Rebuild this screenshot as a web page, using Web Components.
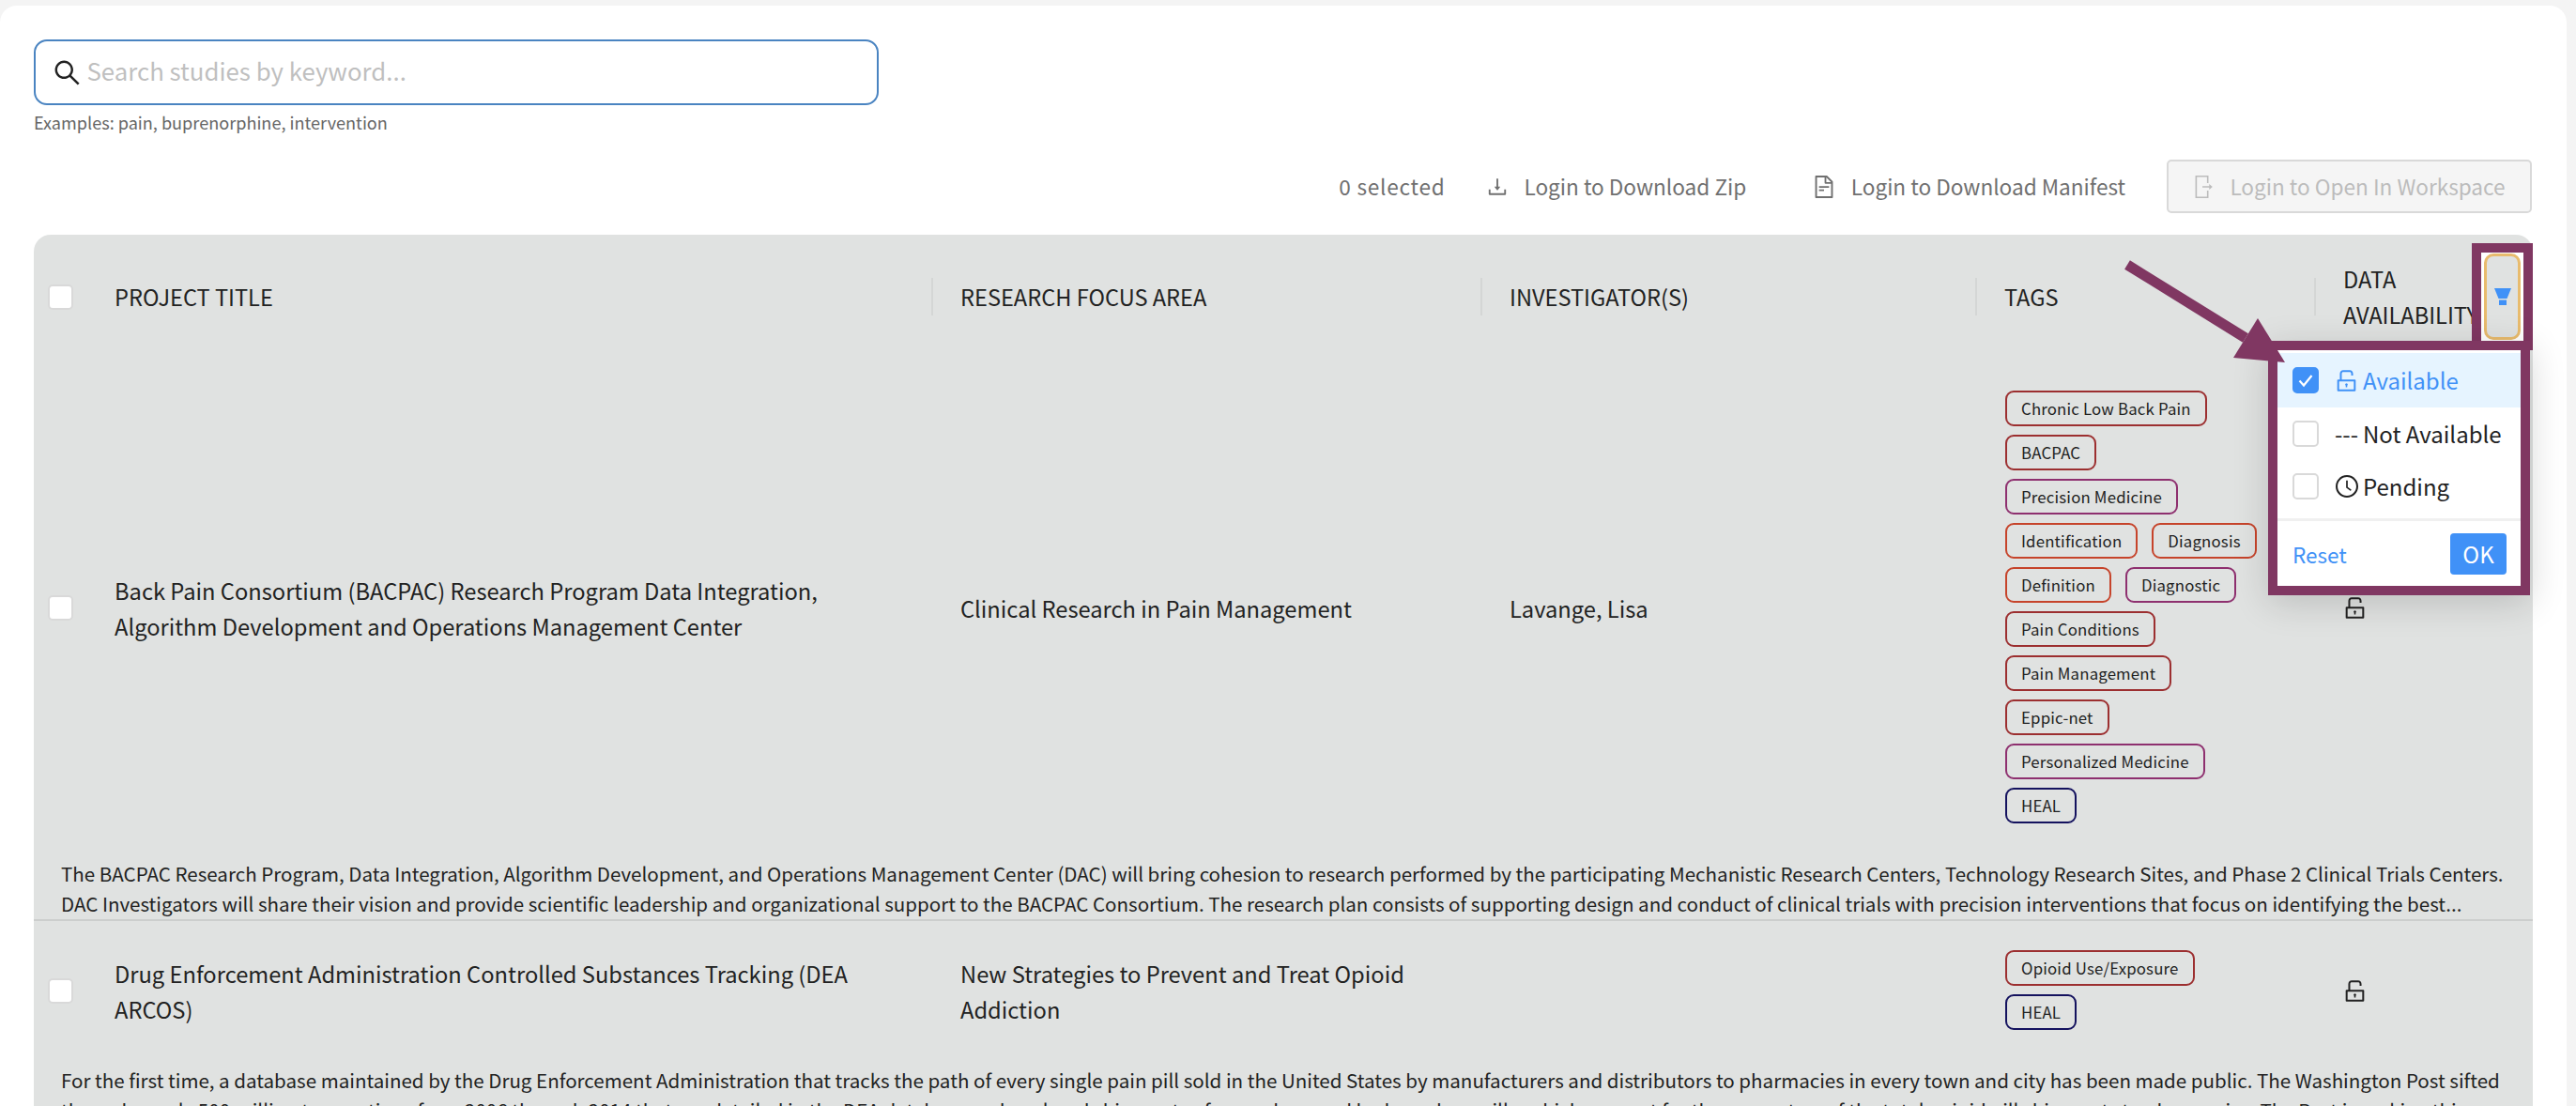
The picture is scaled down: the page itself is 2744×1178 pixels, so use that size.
<!DOCTYPE html>
<html>
<head>
<meta charset="utf-8">
<style>
html,body{margin:0;height:1178px;overflow:hidden;background:#f4f4f4;}
body{font-family:"Noto Sans CJK SC","Source Sans Pro","Noto Sans",sans-serif;color:#222;}
</style>
</head>
<body>
<study-page>
	<search-box placeholder="Search studies by keyword..." hint="Examples: pain, buprenorphine, intervention"></search-box>
	<study-toolbar></study-toolbar>
	<study-table>
		<table-head></table-head>
		<study-row>
			<span slot="title">Back Pain Consortium (BACPAC) Research Program Data Integration, Algorithm Development and Operations Management Center</span>
			<span slot="focus">Clinical Research in Pain Management</span>
			<span slot="people">Lavange, Lisa</span>
			<tag-chip slot="tags" kind="red">Chronic Low Back Pain</tag-chip>
			<tag-chip slot="tags" kind="red">BACPAC</tag-chip>
			<tag-chip slot="tags" kind="purple">Precision Medicine</tag-chip>
			<tag-chip slot="tags" kind="orange">Identification</tag-chip>
			<tag-chip slot="tags" kind="orange">Diagnosis</tag-chip>
			<tag-chip slot="tags" kind="orange">Definition</tag-chip>
			<tag-chip slot="tags" kind="purple">Diagnostic</tag-chip>
			<tag-chip slot="tags" kind="red">Pain Conditions</tag-chip>
			<tag-chip slot="tags" kind="red">Pain Management</tag-chip>
			<tag-chip slot="tags" kind="red">Eppic-net</tag-chip>
			<tag-chip slot="tags" kind="purple">Personalized Medicine</tag-chip>
			<tag-chip slot="tags" kind="navy">HEAL</tag-chip>
			The BACPAC Research Program, Data Integration, Algorithm Development, and Operations Management Center (DAC) will bring cohesion to research performed by the participating Mechanistic Research Centers, Technology Research Sites, and Phase 2 Clinical Trials Centers. DAC Investigators will share their vision and provide scientific leadership and organizational support to the BACPAC Consortium. The research plan consists of supporting design and conduct of clinical trials with precision interventions that focus on identifying the best...
		</study-row>
		<study-row>
			<span slot="title">Drug Enforcement Administration Controlled Substances Tracking (DEA ARCOS)</span>
			<span slot="focus">New Strategies to Prevent and Treat Opioid Addiction</span>
			<tag-chip slot="tags" kind="red">Opioid Use/Exposure</tag-chip>
			<tag-chip slot="tags" kind="navy">HEAL</tag-chip>
			For the first time, a database maintained by the Drug Enforcement Administration that tracks the path of every single pain pill sold in the United States by manufacturers and distributors to pharmacies in every town and city has been made public. The Washington Post sifted through nearly 500 million transactions from 2006 through 2014 that are detailed in the DEA database and analyzed shipments of oxycodone and hydrocodone pills, which account for three-quarters of the total opioid pill shipments to pharmacies. The Post is making this
		</study-row>
		<filter-frame slot="over"></filter-frame>
		<filter-menu slot="over"></filter-menu>
		<callout-arrow slot="over"></callout-arrow>
	</study-table>
</study-page>

<script>
const ICONS = {
	search: 'M909.6 854.5L649.9 594.8C690.2 542.7 712 479 712 412c0-80.2-31.3-155.4-87.9-212.1-56.6-56.7-132-87.9-212.1-87.9s-155.5 31.3-212.1 87.9C143.2 256.5 112 331.8 112 412c0 80.1 31.3 155.5 87.9 212.1C256.5 680.8 331.8 712 412 712c67 0 130.6-21.8 182.7-62l259.7 259.6a8.2 8.2 0 0 0 11.6 0l43.6-43.5a8.2 8.2 0 0 0 0-11.6zM570.4 570.4C528 612.7 471.8 636 412 636s-116-23.3-158.4-65.6C211.3 528 188 471.8 188 412s23.3-116.1 65.6-158.4C296 211.3 352.2 188 412 188s116.1 23.2 158.4 65.6S636 352.2 636 412s-23.3 116.1-65.6 158.4z',
	unlock: 'M832 464H332V240c0-30.9 25.1-56 56-56h248c30.9 0 56 25.1 56 56v68c0 4.4 3.6 8 8 8h56c4.4 0 8-3.6 8-8v-68c0-70.7-57.3-128-128-128H388c-70.7 0-128 57.3-128 128v224h-68c-17.7 0-32 14.3-32 32v384c0 17.7 14.3 32 32 32h640c17.7 0 32-14.3 32-32V496c0-17.7-14.3-32-32-32zm-40 376H232V536h560v304zM484 701v53c0 4.4 3.6 8 8 8h40c4.4 0 8-3.6 8-8v-53a48.01 48.01 0 1 0-56 0z',
	download: 'M505.7 661a8 8 0 0 0 12.6 0l112-141.7c4.1-5.2.4-12.9-6.3-12.9h-74.1V168c0-4.4-3.6-8-8-8h-60c-4.4 0-8 3.6-8 8v338.3H400c-6.7 0-10.4 7.7-6.3 12.9l112 141.8zM878 626h-60c-4.4 0-8 3.6-8 8v154H214V634c0-4.4-3.6-8-8-8h-60c-4.4 0-8 3.6-8 8v198c0 17.7 14.3 32 32 32h684c17.7 0 32-14.3 32-32V634c0-4.4-3.6-8-8-8z',
	file: 'M854.6 288.6L639.4 73.4c-6-6-14.1-9.4-22.6-9.4H192c-17.7 0-32 14.3-32 32v832c0 17.7 14.3 32 32 32h640c17.7 0 32-14.3 32-32V311.3c0-8.5-3.4-16.7-9.4-22.7zM790.2 326H602V137.8L790.2 326zm1.8 562H232V136h302v216a42 42 0 0 0 42 42h216v494zM504 618H320c-4.4 0-8 3.6-8 8v48c0 4.4 3.6 8 8 8h184c4.4 0 8-3.6 8-8v-48c0-4.4-3.6-8-8-8zM312 490v48c0 4.4 3.6 8 8 8h384c4.4 0 8-3.6 8-8v-48c0-4.4-3.6-8-8-8H320c-4.4 0-8 3.6-8 8z',
	clock: 'M512 64C264.6 64 64 264.6 64 512s200.6 448 448 448 448-200.6 448-448S759.4 64 512 64zm0 820c-205.4 0-372-166.6-372-372s166.6-372 372-372 372 166.6 372 372-166.6 372-372 372zM686.7 638.6L544.1 535.5V288c0-4.4-3.6-8-8-8H488c-4.4 0-8 3.6-8 8v275.4c0 2.6 1.2 5 3.3 6.5l165.4 120.6c3.6 2.6 8.6 1.8 11.2-1.7l28.6-39c2.6-3.7 1.8-8.7-1.8-11.2z',
	exit: 'M160 64h520v300h-60V124H220v776h400V660h60v300H160zM440 482h270V400l130 112-130 112V542H440z'
};

class StudyIcon extends HTMLElement {
	constructor() {
		super();
		const size = this.getAttribute('size') || 24;
		this.attachShadow({mode: 'open'}).innerHTML = `
			<style>:host{display:inline-flex;flex:none;} svg{display:block;fill:currentColor;}</style>
			<svg width="${size}" height="${size}" viewBox="64 64 896 896"><path d="${ICONS[this.getAttribute('name')]}"/></svg>`;
	}
}
customElements.define('study-icon', StudyIcon);

class StudyPage extends HTMLElement {
	constructor() {
		super();
		this.attachShadow({mode: 'open'}).innerHTML = `
			<style>
			:host{display:block;margin:6px 10px 0 0;padding:36px 36px 0;background:#fff;border-radius:18px 18px 0 0;height:1172px;box-sizing:border-box;overflow:hidden;}
			</style>
			<slot></slot>`;
	}
}
customElements.define('study-page', StudyPage);

class SearchBox extends HTMLElement {
	constructor() {
		super();
		this.attachShadow({mode: 'open'}).innerHTML = `
			<style>
			:host{display:block;}
			.box{width:900px;height:70px;box-sizing:border-box;border:2px solid #4a84c1;border-radius:14px;display:flex;align-items:center;gap:6.5px;padding:0 19px;color:#222;}
			.ph{font-size:25.8px;color:#bfbfbf;line-height:40px;margin-top:-4px;}
			.hint{font-size:18.1px;line-height:30px;margin-top:3px;color:#666;}
			</style>
			<div class="box"><study-icon name="search" size="29"></study-icon><span class="ph">${this.getAttribute('placeholder')}</span></div>
			<div class="hint">${this.getAttribute('hint')}</div>`;
	}
}
customElements.define('search-box', SearchBox);

class ToolAction extends HTMLElement {
	constructor() {
		super();
		this.attachShadow({mode: 'open'}).innerHTML = `
			<style>
			:host{display:inline-flex;align-items:center;gap:17px;line-height:40px;}
			</style>
			<study-icon name="${this.getAttribute('icon')}" size="${this.getAttribute('size') || 24}"></study-icon><span><slot></slot></span>`;
	}
}
customElements.define('tool-action', ToolAction);

class StudyToolbar extends HTMLElement {
	constructor() {
		super();
		this.attachShadow({mode: 'open'}).innerHTML = `
			<style>
			:host{display:flex;align-items:center;justify-content:flex-end;height:57px;margin:25px 1px 23px 0;font-size:22.6px;color:#707070;}
			.count{margin-right:45px;letter-spacing:.75px;}
			.second{margin-left:70.5px;margin-right:44px;}
			.open{width:389px;height:57px;box-sizing:border-box;border:2px solid #d9d9d9;border-radius:5px;background:#f5f5f5;display:flex;align-items:center;justify-content:center;gap:15px;color:#bcbcbc;}
			</style>
			<span class="count">0 selected</span>
			<tool-action icon="download" size="22">Login to Download Zip</tool-action>
			<tool-action class="second" icon="file">Login to Download Manifest</tool-action>
			<div class="open"><study-icon name="exit" size="24"></study-icon><span>Login to Open In Workspace</span></div>`;
	}
}
customElements.define('study-toolbar', StudyToolbar);

class StudyTable extends HTMLElement {
	constructor() {
		super();
		this.attachShadow({mode: 'open'}).innerHTML = `
			<style>
			:host{display:block;position:relative;background:#e0e2e1;border-radius:18px 18px 0 0;height:1000px;}
			</style>
			<slot></slot><slot name="over"></slot>`;
	}
}
customElements.define('study-table', StudyTable);

class CheckMark extends HTMLElement {
	constructor() {
		super();
		this.attachShadow({mode: 'open'}).innerHTML = `
			<style>
			:host{display:block;width:var(--check-size,27px);height:var(--check-size,27px);box-sizing:border-box;background:#fff;border:2px solid #d9d9d9;border-radius:5px;flex:none;}
			:host([checked]){background:#4091f7;border-color:#4091f7;}
			svg{display:none;width:100%;height:100%;}
			:host([checked]) svg{display:block;}
			</style>
			<svg viewBox="0 0 24 24"><path d="M5.5 12.5l4.5 5L18.5 7" fill="none" stroke="#fff" stroke-width="2.2"/></svg>`;
	}
}
customElements.define('check-mark', CheckMark);

class TableHead extends HTMLElement {
	constructor() {
		super();
		this.attachShadow({mode: 'open'}).innerHTML = `
			<style>
			:host{display:grid;grid-template-columns:54px 902px 585px 527px 361px 233px;height:132px;padding-bottom:3px;align-items:center;font-size:23.6px;line-height:38px;color:#222;}
			.check{padding-left:15px;}
			.cell{display:flex;align-items:center;}
			.cell::before{content:"";width:2px;height:40px;background:#d4d6d5;margin-right:29px;flex:none;}
			.first::before{background:transparent;margin-right:30px;}
			.data{width:120px;}
			</style>
			<div class="check"><check-mark></check-mark></div>
			<div class="cell first">PROJECT TITLE</div>
			<div class="cell">RESEARCH FOCUS AREA</div>
			<div class="cell">INVESTIGATOR(S)</div>
			<div class="cell">TAGS</div>
			<div class="cell"><span class="data">DATA AVAILABILITY</span></div>`;
	}
}
customElements.define('table-head', TableHead);

class TagChip extends HTMLElement {
	constructor() {
		super();
		this.attachShadow({mode: 'open'}).innerHTML = `
			<style>
			:host{display:inline-flex;align-items:center;height:38px;box-sizing:border-box;padding:0 15px;border:2px solid #9c2f30;border-radius:9px;font-size:16.8px;color:#222;letter-spacing:.18px;white-space:nowrap;}
			:host([kind=purple]){border-color:#8e306f;}
			:host([kind=orange]){border-color:#c6442b;}
			:host([kind=navy]){border-color:#14125e;}
			</style>
			<slot></slot>`;
	}
}
customElements.define('tag-chip', TagChip);

class StudyRow extends HTMLElement {
	constructor() {
		super();
		this.attachShadow({mode: 'open'}).innerHTML = `
			<style>
			:host{display:block;border-bottom:2px solid #cccecd;font-size:23.7px;line-height:38px;color:#222;}
			.main{display:grid;grid-template-columns:54px 902px 585px 527px 361px 233px;align-items:center;padding:31px 0 35px;}
			.check{padding-left:15px;}
			.title{padding:0 30px 0 32px;}
			.focus,.people{padding:0 30px 0 31px;}
			.tags{padding:0 0 2px 32px;width:280px;display:flex;flex-wrap:wrap;gap:9px 15px;}
			.status{padding-left:31px;color:#222;display:flex;}
			.desc{padding:0 29px;font-size:20.55px;line-height:32px;height:65px;overflow:hidden;}
			</style>
			<div class="main">
				<div class="check"><check-mark></check-mark></div>
				<div class="title"><slot name="title"></slot></div>
				<div class="focus"><slot name="focus"></slot></div>
				<div class="people"><slot name="people"></slot></div>
				<div class="tags"><slot name="tags"></slot></div>
				<div class="status"><study-icon name="unlock" size="25"></study-icon></div>
			</div>
			<div class="desc"><slot></slot></div>`;
	}
}
customElements.define('study-row', StudyRow);

class FilterFrame extends HTMLElement {
	constructor() {
		super();
		this.attachShadow({mode: 'open'}).innerHTML = `
			<style>
			:host{position:absolute;left:2597px;top:9px;width:65px;height:114px;box-sizing:border-box;border:10px solid #803762;background:#fff;padding:1px 3px;}
			.btn{height:100%;box-sizing:border-box;border:3px solid #e8bb6d;border-radius:10px;background:#e0e2e1;display:flex;align-items:center;justify-content:center;}
			</style>
			<div class="btn"><svg width="18" height="18" viewBox="0 0 18 18"><path d="M0 0H18L13.5 11H4.5Z M5 12.5H13V18H5Z" fill="#4091f7"/></svg></div>`;
	}
}
customElements.define('filter-frame', FilterFrame);

class FilterOption extends HTMLElement {
	constructor() {
		super();
		const on = this.hasAttribute('checked');
		this.attachShadow({mode: 'open'}).innerHTML = `
			<style>
			:host{display:flex;align-items:center;height:56px;padding-left:16px;font-size:24px;line-height:36px;color:#222;--check-size:28px;}
			:host([checked]){background:#e6f4ff;color:#4091f7;height:58px;}
			.lead{width:27px;margin:0 4px 0 16px;display:flex;justify-content:center;}
			</style>
			<check-mark ${on ? 'checked' : ''}></check-mark><span class="lead"><slot name="lead"></slot></span><span><slot></slot></span>`;
	}
}
customElements.define('filter-option', FilterOption);

class FilterMenu extends HTMLElement {
	constructor() {
		super();
		this.attachShadow({mode: 'open'}).innerHTML = `
			<style>
			:host{position:absolute;left:2380px;top:113px;width:279px;height:271px;box-sizing:border-box;border:10px solid #803762;background:#fff;box-shadow:0 8px 36px rgba(0,0,0,.16);padding-top:3px;display:flex;flex-direction:column;}
			.foot{margin-top:auto;height:69px;border-top:3px solid #f0f0f0;display:flex;align-items:center;justify-content:space-between;padding:0 15px 0 16px;font-size:22.5px;color:#4091f7;}
			.ok{width:60px;height:44px;border-radius:4px;background:#4091f7;color:#fff;font-size:24px;display:flex;align-items:center;justify-content:center;}
			</style>
			<filter-option checked><study-icon slot="lead" name="unlock" size="25"></study-icon>Available</filter-option>
			<filter-option><span slot="lead">---</span>Not Available</filter-option>
			<filter-option><study-icon slot="lead" name="clock" size="24"></study-icon>Pending</filter-option>
			<div class="foot"><span>Reset</span><span class="ok">OK</span></div>`;
	}
}
customElements.define('filter-menu', FilterMenu);

class CalloutArrow extends HTMLElement {
	constructor() {
		super();
		this.attachShadow({mode: 'open'}).innerHTML = `
			<style>:host{position:absolute;left:2214px;top:20px;} svg{display:block;}</style>
			<svg width="200" height="130" viewBox="0 0 200 130"><path d="M16 12L142 90" stroke="#803762" stroke-width="11" fill="none"/><path d="M155 69L129 111L184 116Z" fill="#803762"/></svg>`;
	}
}
customElements.define('callout-arrow', CalloutArrow);
</script>
</body>
</html>
